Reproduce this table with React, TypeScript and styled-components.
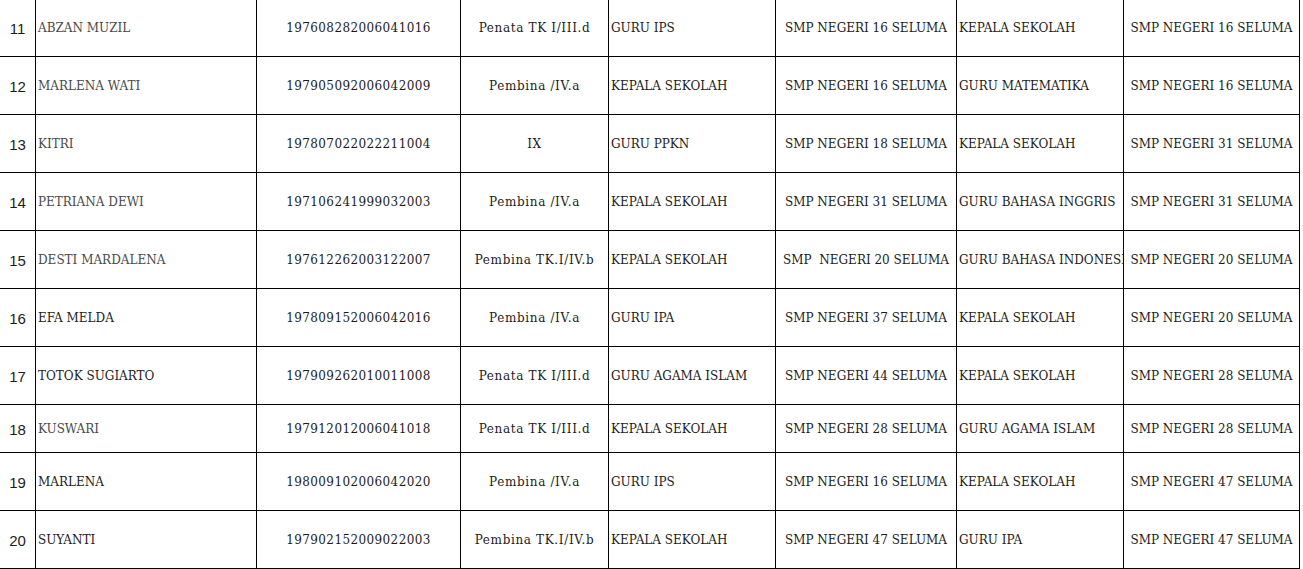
import React from "react";
import styled, { createGlobalStyle } from "styled-components";

const Global = createGlobalStyle`
  html, body { margin: 0; padding: 0; background: #ffffff; }
  body { overflow: hidden; }
`;

const Sheet = styled.div`
  width: 1300px;
  display: flex;
  flex-direction: column;
  font-family: "DejaVu Serif", "Liberation Serif", serif;
  font-size: 12px;
  color: #1c1c1c;
`;

const Row = styled.div<{ $h: number }>`
  display: grid;
  grid-template-columns: 36px 221px 204px 148px 167px 181px 167px 176px;
  height: ${(p) => p.$h}px;
  border-bottom: 1px solid #000;
  box-sizing: border-box;
`;

const Cell = styled.div<{ $align?: "left" | "center"; $muted?: boolean; $spread?: number }>`
  box-sizing: border-box;
  border-right: 1px solid #000;
  display: flex;
  align-items: center;
  justify-content: ${(p) => (p.$align === "left" ? "flex-start" : "center")};
  padding-left: ${(p) => (p.$align === "left" ? "2px" : "0")};
  white-space: pre;
  overflow: hidden;
  letter-spacing: ${(p) => p.$spread ?? 0}px;
  color: ${(p) => (p.$muted ? "#4a4a4a" : "#1c1c1c")};
`;

const NumCell = styled(Cell)`
  font-family: "Liberation Sans", Arial, sans-serif;
  font-size: 15px;
  padding-top: 1px;
`;

type Rec = {
  no: string;
  name: string;
  nip: string;
  gol: string;
  jab: string;
  unit: string;
  jab2: string;
  unit2: string;
  h: number;
  muted?: boolean;
};

const rows: Rec[] = [
  { no: "11", name: "ABZAN MUZIL", nip: "197608282006041016", gol: "Penata TK I/III.d", jab: "GURU IPS", unit: "SMP NEGERI 16 SELUMA", jab2: "KEPALA SEKOLAH", unit2: "SMP NEGERI 16 SELUMA", h: 57, muted: true },
  { no: "12", name: "MARLENA WATI", nip: "197905092006042009", gol: "Pembina /IV.a", jab: "KEPALA SEKOLAH", unit: "SMP NEGERI 16 SELUMA", jab2: "GURU MATEMATIKA", unit2: "SMP NEGERI 16 SELUMA", h: 58, muted: true },
  { no: "13", name: "KITRI", nip: "197807022022211004", gol: "IX", jab: "GURU PPKN", unit: "SMP NEGERI 18 SELUMA", jab2: "KEPALA SEKOLAH", unit2: "SMP NEGERI 31 SELUMA", h: 58, muted: true },
  { no: "14", name: "PETRIANA DEWI", nip: "197106241999032003", gol: "Pembina /IV.a", jab: "KEPALA SEKOLAH", unit: "SMP NEGERI 31 SELUMA", jab2: "GURU BAHASA INGGRIS", unit2: "SMP NEGERI 31 SELUMA", h: 58, muted: true },
  { no: "15", name: "DESTI MARDALENA", nip: "197612262003122007", gol: "Pembina TK.I/IV.b", jab: "KEPALA SEKOLAH", unit: "SMP  NEGERI 20 SELUMA", jab2: "GURU BAHASA INDONESIA", unit2: "SMP NEGERI 20 SELUMA", h: 58, muted: true },
  { no: "16", name: "EFA MELDA", nip: "197809152006042016", gol: "Pembina /IV.a", jab: "GURU IPA", unit: "SMP NEGERI 37 SELUMA", jab2: "KEPALA SEKOLAH", unit2: "SMP NEGERI 20 SELUMA", h: 58 },
  { no: "17", name: "TOTOK SUGIARTO", nip: "197909262010011008", gol: "Penata TK I/III.d", jab: "GURU AGAMA ISLAM", unit: "SMP NEGERI 44 SELUMA", jab2: "KEPALA SEKOLAH", unit2: "SMP NEGERI 28 SELUMA", h: 58 },
  { no: "18", name: "KUSWARI", nip: "197912012006041018", gol: "Penata TK I/III.d", jab: "KEPALA SEKOLAH", unit: "SMP NEGERI 28 SELUMA", jab2: "GURU AGAMA ISLAM", unit2: "SMP NEGERI 28 SELUMA", h: 48, muted: true },
  { no: "19", name: "MARLENA", nip: "198009102006042020", gol: "Pembina /IV.a", jab: "GURU IPS", unit: "SMP NEGERI 16 SELUMA", jab2: "KEPALA SEKOLAH", unit2: "SMP NEGERI 47 SELUMA", h: 58 },
  { no: "20", name: "SUYANTI", nip: "197902152009022003", gol: "Pembina TK.I/IV.b", jab: "KEPALA SEKOLAH", unit: "SMP NEGERI 47 SELUMA", jab2: "GURU IPA", unit2: "SMP NEGERI 47 SELUMA", h: 58 },
];

export default function App() {
  return (
    <>
      <Global />
      <Sheet>
        {rows.map((r) => (
          <Row key={r.no} $h={r.h}>
            <NumCell>{r.no}</NumCell>
            <Cell $align="left" $muted={r.muted}>{r.name}</Cell>
            <Cell $spread={0.4}>{r.nip}</Cell>
            <Cell $spread={0.65}>{r.gol}</Cell>
            <Cell $align="left">{r.jab}</Cell>
            <Cell>{r.unit}</Cell>
            <Cell $align="left">{r.jab2}</Cell>
            <Cell>{r.unit2}</Cell>
          </Row>
        ))}
      </Sheet>
    </>
  );
}
